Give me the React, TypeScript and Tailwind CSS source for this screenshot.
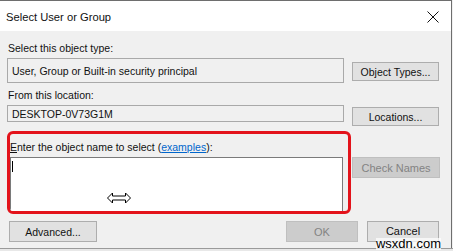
import React from "react";

const font = { fontFamily: '"Liberation Sans", Arial, sans-serif' };

export default function App() {
  return (
    <div
      className="relative w-[453px] h-[251px] overflow-hidden bg-[#f0f0f0] text-[10.5px] leading-[16px] text-[#111]"
      style={font}
    >
      <div className="border-t border-r border-[#6e6e6e] w-[452px] h-[251px] flex flex-col">
        {/* Title bar */}
        <div className="h-[30px] bg-white flex items-center justify-between pl-[6px] pr-[12px] shrink-0">
          <span className="text-[11.2px] leading-[16px] mt-[1px]">Select User or Group</span>
          <svg width="12" height="12" viewBox="0 0 12 12" className="mt-[1px]">
            <path d="M0.5 0.5 L11.5 11.5 M11.5 0.5 L0.5 11.5" stroke="#111" strokeWidth="1" fill="none" />
          </svg>
        </div>

        {/* Body */}
        <div className="flex flex-col pl-[7px]">
          <div className="mt-[9px] pl-[1px]">Select this object type:</div>
          <div className="mt-[2px] flex items-start gap-[8px]">
            <div className="w-[337px] h-[25px] border border-[#a9a9a9] bg-[#f0f0f0] flex items-center pl-[4px]">
              User, Group or Built-in security principal
            </div>
            <div className="mt-[4px] w-[87px] h-[19px] border border-[#adadad] bg-[#e1e1e1] flex items-center justify-center">
              Object Types...
            </div>
          </div>

          <div className="mt-[4px] pl-[1px]">From this location:</div>
          <div className="mt-[2px] flex items-start gap-[8px]">
            <div className="w-[337px] h-[17px] border border-[#a9a9a9] bg-[#f0f0f0] flex items-center pl-[4px]">
              DESKTOP-0V73G1M
            </div>
            <div className="mt-[2px] w-[87px] h-[19px] border border-[#adadad] bg-[#e1e1e1] flex items-center justify-center">
              Locations...
            </div>
          </div>

          <div className="mt-[5px] flex items-start">
            <div className="relative w-[344px] h-[83px] border-[3px] border-[#e3131b] rounded-[6px] flex flex-col overflow-hidden">
              <div className="mt-[5px]">
                <span className="underline">E</span>nter the object name to select (
                <span className="text-[#0066cc] underline">examples</span>):
              </div>
              <div className="relative mt-[2px] w-[333px] flex-1 border-t border-l border-r border-[#7a7a7a] bg-white">
                <div className="absolute left-[1px] top-[3px] w-[1px] h-[11px] bg-black" />
                <svg
                  className="absolute left-[96px] top-[34px]"
                  width="24"
                  height="12"
                  viewBox="0 0 24 12"
                >
                  <path
                    d="M0.5 6 L5.5 1 L5.5 4 L18.5 4 L18.5 1 L23.5 6 L18.5 11 L18.5 8 L5.5 8 L5.5 11 Z"
                    fill="white"
                    stroke="black"
                    strokeWidth="1"
                    strokeLinejoin="miter"
                  />
                </svg>
              </div>
            </div>
            <div className="ml-[1px] mt-[26px] w-[88px] h-[21px] border border-[#bfbfbf] bg-[#cccccc] text-[#838383] text-[11px] flex items-center justify-center">
              Check Names
            </div>
          </div>

          <div className="mt-[7px] flex items-start">
            <div className="ml-[2px] w-[88px] h-[21px] border border-[#adadad] bg-[#e1e1e1] flex items-center justify-center">
              Advanced...
            </div>
            <div className="ml-[189px] w-[72px] h-[21px] border border-[#bfbfbf] bg-[#cccccc] text-[#838383] text-[11px] flex items-center justify-center">
              OK
            </div>
            <div className="ml-[9px] w-[72px] h-[21px] border border-[#adadad] bg-[#e1e1e1] flex items-start justify-center pt-[1px] text-[11px]">
              Cancel
            </div>
          </div>
        </div>
      </div>
      <div className="absolute left-0 bottom-0 w-[453px] h-[3px] border-t border-[#9a9a9a] bg-[#e8e8e8]" />
      <span
        className="absolute right-[12px] bottom-[1px] text-[13px] leading-[12px] text-black bg-white/70"
        style={{ fontFamily: '"Liberation Sans", Arial, sans-serif' }}
      >
        wsxdn.com
      </span>
    </div>
  );
}
